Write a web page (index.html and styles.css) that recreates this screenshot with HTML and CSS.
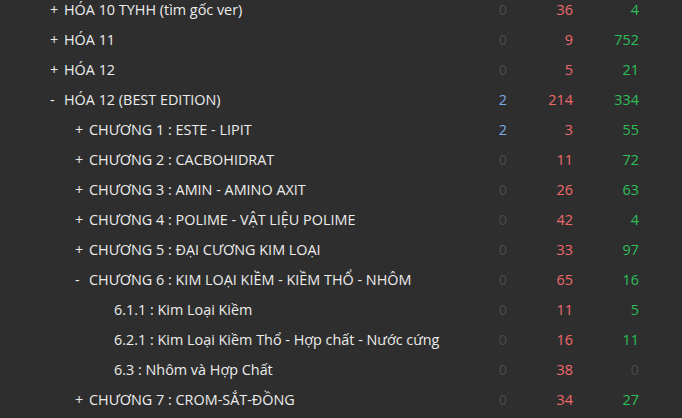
FILE: index.html
```html
<!DOCTYPE html>
<html lang="vi">
<head>
<meta charset="utf-8">
<link rel="stylesheet" href="styles.css">
</head>
<body>
<div class="tree">
  <div class="row lv1"><span class="label"><span class="tg">+</span>HÓA 10 TYHH (tìm gốc ver)</span><span class="n zero">0</span><span class="n red">36</span><span class="n green">4</span></div>
  <div class="row lv1"><span class="label"><span class="tg">+</span>HÓA 11</span><span class="n zero">0</span><span class="n red">9</span><span class="n green">752</span></div>
  <div class="row lv1"><span class="label"><span class="tg">+</span>HÓA 12</span><span class="n zero">0</span><span class="n red">5</span><span class="n green">21</span></div>
  <div class="row lv1"><span class="label"><span class="tg">-</span>HÓA 12 (BEST EDITION)</span><span class="n blue">2</span><span class="n red">214</span><span class="n green">334</span></div>
  <div class="row lv2"><span class="label"><span class="tg">+</span>CHƯƠNG 1 : ESTE - LIPIT</span><span class="n blue">2</span><span class="n red">3</span><span class="n green">55</span></div>
  <div class="row lv2"><span class="label"><span class="tg">+</span>CHƯƠNG 2 : CACBOHIDRAT</span><span class="n zero">0</span><span class="n red">11</span><span class="n green">72</span></div>
  <div class="row lv2"><span class="label"><span class="tg">+</span>CHƯƠNG 3 : AMIN - AMINO AXIT</span><span class="n zero">0</span><span class="n red">26</span><span class="n green">63</span></div>
  <div class="row lv2"><span class="label"><span class="tg">+</span>CHƯƠNG 4 : POLIME - VẬT LIỆU POLIME</span><span class="n zero">0</span><span class="n red">42</span><span class="n green">4</span></div>
  <div class="row lv2"><span class="label"><span class="tg">+</span>CHƯƠNG 5 : ĐẠI CƯƠNG KIM LOẠI</span><span class="n zero">0</span><span class="n red">33</span><span class="n green">97</span></div>
  <div class="row lv2"><span class="label"><span class="tg">-</span>CHƯƠNG 6 : KIM LOẠI KIỀM - KIỀM THỔ - NHÔM</span><span class="n zero">0</span><span class="n red">65</span><span class="n green">16</span></div>
  <div class="row lv3"><span class="label">6.1.1 : Kim Loại Kiềm</span><span class="n zero">0</span><span class="n red">11</span><span class="n green">5</span></div>
  <div class="row lv3"><span class="label">6.2.1 : Kim Loại Kiềm Thổ - Hợp chất - Nước cứng</span><span class="n zero">0</span><span class="n red">16</span><span class="n green">11</span></div>
  <div class="row lv3"><span class="label">6.3 : Nhôm và Hợp Chất</span><span class="n zero">0</span><span class="n red">38</span><span class="n zero">0</span></div>
  <div class="row lv2"><span class="label"><span class="tg">+</span>CHƯƠNG 7 : CROM-SẮT-ĐỒNG</span><span class="n zero">0</span><span class="n red">34</span><span class="n green">27</span></div>
</div>
</body>
</html>
```
FILE: styles.css
```css
html, body {
  margin: 0;
  padding: 0;
  background: #2e2e2e;
  height: 100%;
  overflow: hidden;
}
body {
  font-family: "Open Sans", "Noto Sans", sans-serif;
  font-size: 14.4px;
  color: #ececec;
}
.tree {
  margin-top: -5px;
  padding-right: 43px;
}
.row {
  display: grid;
  grid-template-columns: 1fr 66px 66px 66px;
  height: 30px;
  line-height: 30px;
  white-space: nowrap;
}
.label {
  overflow: hidden;
}
.lv1 .label { padding-left: 50px; }
.lv2 .label { padding-left: 75px; }
.lv3 .label { padding-left: 114px; }
.tg {
  display: inline-block;
  width: 14px;
}
.n { text-align: right; }
.zero { color: #4a4a4a; }
.red { color: #ef6a6a; }
.green { color: #2dbf5a; }
.blue { color: #7aaae6; }
```
